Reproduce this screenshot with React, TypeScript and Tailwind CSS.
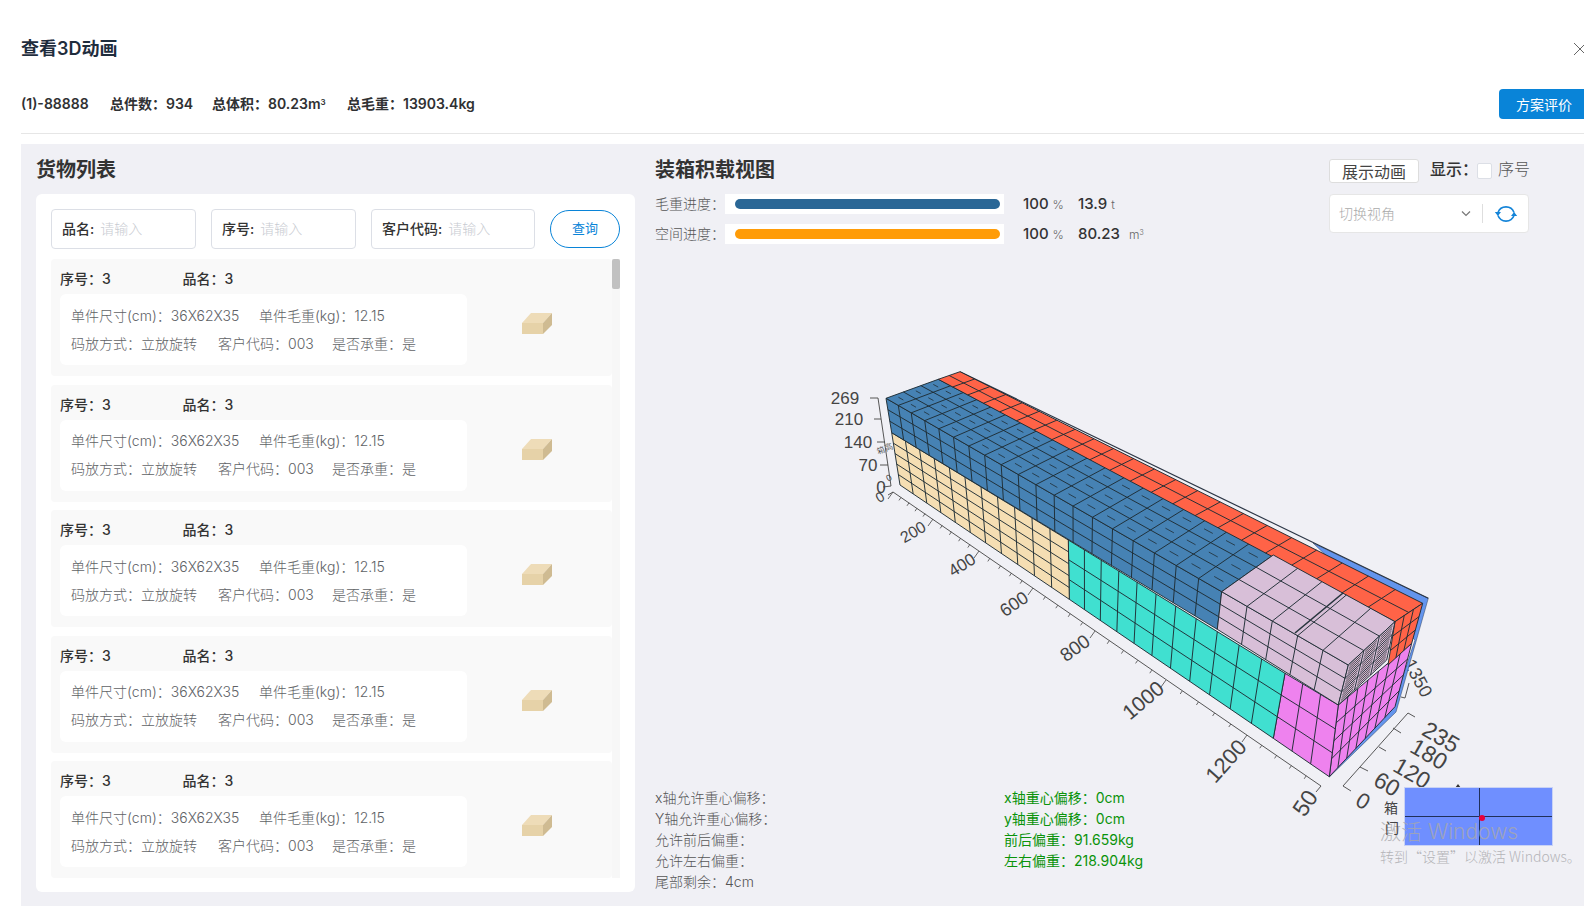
import React from "react";

type P = [number, number];
type Q = [P, P, P, P];

const bl = (q: Q, u: number, v: number): P => {
  const top: P = [q[0][0] + (q[1][0] - q[0][0]) * u, q[0][1] + (q[1][1] - q[0][1]) * u];
  const bot: P = [q[3][0] + (q[2][0] - q[3][0]) * u, q[3][1] + (q[2][1] - q[3][1]) * u];
  return [top[0] + (bot[0] - top[0]) * v, top[1] + (bot[1] - top[1]) * v];
};
const even = (n: number) => Array.from({ length: n + 1 }, (_, i) => i / n);
const eased = (n: number, a = 0.68) => even(n).map((t) => a * t + (1 - a) * t * t);

function Face({ q, fill, us, vs, dash, hatch }: { q: Q; fill: string; us: number[]; vs: number[]; dash?: boolean; hatch?: boolean }) {
  const lines: React.ReactNode[] = [];
  us.forEach((u, i) => {
    const a = bl(q, u, 0);
    const b = bl(q, u, 1);
    lines.push(<line key={"u" + i} x1={a[0]} y1={a[1]} x2={b[0]} y2={b[1]} stroke="#1f2d35" strokeWidth={0.95} />);
  });
  vs.forEach((v, i) => {
    const a = bl(q, 0, v);
    const b = bl(q, 1, v);
    lines.push(<line key={"v" + i} x1={a[0]} y1={a[1]} x2={b[0]} y2={b[1]} stroke="#1f2d35" strokeWidth={0.95} />);
  });
  if (dash) {
    for (let i = 0; i < us.length - 1; i++) {
      for (let j = 0; j < vs.length - 1; j++) {
        const du = us[i + 1] - us[i];
        const dv = vs[j + 1] - vs[j];
        const a = bl(q, us[i] + du * 0.3, vs[j] + dv * 0.5);
        const b = bl(q, us[i] + du * 0.7, vs[j] + dv * 0.5);
        lines.push(<line key={`d${i}-${j}`} x1={a[0]} y1={a[1]} x2={b[0]} y2={b[1]} stroke="#1f2d35" strokeWidth={0.8} />);
      }
    }
  }
  if (hatch) {
    for (let i = 0; i < us.length - 1; i++) {
      for (let j = 0; j < vs.length - 1; j++) {
        const du = us[i + 1] - us[i];
        const dv = vs[j + 1] - vs[j];
        [0.2, 0.4, 0.6, 0.8].forEach((f, k) => {
          const a = bl(q, us[i] + du * 0.12, vs[j] + dv * f);
          const b = bl(q, us[i] + du * 0.88, vs[j] + dv * f);
          lines.push(<line key={`h${i}-${j}-${k}`} x1={a[0]} y1={a[1]} x2={b[0]} y2={b[1]} stroke="#2c2c30" strokeWidth={0.8} />);
        });
      }
    }
  }
  return (
    <g>
      <polygon points={q.map((p) => p.join(",")).join(" ")} fill={fill} />
      {lines}
    </g>
  );
}

function AxisLabel({ x, y, r, s = 17, children }: { x: number; y: number; r: number; s?: number; children: React.ReactNode }) {
  return (
    <text x={x} y={y} fontSize={s} fill="#444" textAnchor="middle" dominantBaseline="central" transform={`rotate(${r} ${x} ${y})`} fontFamily="'Liberation Sans', sans-serif">
      {children}
    </text>
  );
}

const xRoots: P[] = [[893, 492], [933, 519], [979, 551], [1033, 588], [1095, 631], [1166, 680], [1247, 735], [1321, 786]];

function Chart() {
  const ticks: React.ReactNode[] = [];
  xRoots.slice(0, -1).forEach((p, i) => {
    const nx = xRoots[i + 1];
    for (let k = 0; k < 5; k++) {
      const x = p[0] + ((nx[0] - p[0]) * k) / 5;
      const y = p[1] + ((nx[1] - p[1]) * k) / 5;
      const major = k === 0;
      ticks.push(<line key={`t${i}-${k}`} x1={x} y1={y} x2={x - (major ? 5 : 2)} y2={y + (major ? 7 : 3)} stroke="#444" strokeWidth={0.8} />);
    }
  });
  return (
    <svg width={929} height={538} viewBox="655 250 929 538" className="block overflow-visible">
      {/* axes */}
      <polyline points="870,398 878,398 891,486 883,487" fill="none" stroke="#444" strokeWidth={0.9} />
      <line x1={874} y1={419} x2={881} y2={419} stroke="#444" strokeWidth={0.9} />
      <line x1={877} y1={442} x2={885} y2={442} stroke="#444" strokeWidth={0.9} />
      <line x1={880} y1={465} x2={888} y2={465} stroke="#444" strokeWidth={0.9} />
      <AxisLabel x={845} y={398} r={0}>269</AxisLabel>
      <AxisLabel x={849} y={419} r={0}>210</AxisLabel>
      <AxisLabel x={858} y={442} r={0}>140</AxisLabel>
      <AxisLabel x={868} y={465} r={0}>70</AxisLabel>
      <AxisLabel x={881} y={487} r={0}>0</AxisLabel>
      <AxisLabel x={885} y={449} r={-20} s={8}>箱高</AxisLabel>
      <AxisLabel x={889} y={478} r={-30} s={9}>0</AxisLabel>

      <polyline points="888,495 893,492 1321,786 1316,792" fill="none" stroke="#444" strokeWidth={0.9} />
      {ticks}
      <AxisLabel x={880} y={497} r={-30} s={14}>0</AxisLabel>
      <AxisLabel x={913} y={532} r={-30} s={16}>200</AxisLabel>
      <AxisLabel x={962} y={565} r={-32} s={17}>400</AxisLabel>
      <AxisLabel x={1014} y={604} r={-34} s={18}>600</AxisLabel>
      <AxisLabel x={1075} y={648} r={-36} s={19}>800</AxisLabel>
      <AxisLabel x={1143} y={700} r={-40} s={21}>1000</AxisLabel>
      <AxisLabel x={1226} y={761} r={-48} s={22}>1200</AxisLabel>
      <AxisLabel x={1305} y={803} r={-56} s={23}>50</AxisLabel>

      <polyline points="1351,791 1343,786 1408,713 1415,717" fill="none" stroke="#444" strokeWidth={0.9} />
      <line x1={1360} y1={767} x2={1368} y2={771} stroke="#444" strokeWidth={0.9} />
      <line x1={1379} y1={747} x2={1386} y2={751} stroke="#444" strokeWidth={0.9} />
      <line x1={1393} y1={728} x2={1401} y2={733} stroke="#444" strokeWidth={0.9} />
      <AxisLabel x={1363} y={801} r={30} s={22}>0</AxisLabel>
      <AxisLabel x={1387} y={784} r={30} s={23}>60</AxisLabel>
      <AxisLabel x={1412} y={773} r={30} s={23}>120</AxisLabel>
      <AxisLabel x={1429} y={754} r={30} s={23}>180</AxisLabel>
      <AxisLabel x={1441} y={737} r={30} s={23}>235</AxisLabel>

      <polyline points="1401,697 1405,698 1409,683" fill="none" stroke="#444" strokeWidth={0.9} />
      <AxisLabel x={1418} y={678} r={62} s={18}>1350</AxisLabel>
      <polygon points="1458,784 1455,788 1461,788" fill="#333" />

      {/* container */}
      <polygon points="1313,543 1428.3,598.3 1396,712 1329.3,777 1395,700 1415,640" fill="#6495ed" stroke="#2b3f5c" strokeWidth={0.5} />
      <line x1={960} y1={371.7} x2={1428.3} y2={598.3} stroke="#2b3645" strokeWidth={1.2} />

      <Face q={[[1338.3, 705], [1411.7, 643.3], [1395, 706.7], [1329.3, 776.7]]} fill="#ee82ee" us={eased(7, 0.9)} vs={even(4)} />
      <Face q={[[1285, 673.3], [1338.3, 705], [1329.3, 776.7], [1273.3, 738.3]]} fill="#ee82ee" us={even(3)} vs={even(3)} />
      <Face q={[[1068.3, 540], [1285, 673.3], [1273.3, 738.3], [1069.3, 599.3]]} fill="#40e0d0" us={eased(11, 0.8)} vs={even(3)} />
      <Face q={[[891.7, 432.7], [1068.3, 540], [1069.3, 599.3], [900, 485]]} fill="#f5deb3" us={eased(11, 0.84)} vs={even(5)} />
      <Face q={[[886, 398.3], [1221.7, 591.7], [1217.3, 629.3], [891.7, 432.7]]} fill="#4682b4" us={eased(19)} vs={even(3)} />
      <Face q={[[886, 398.3], [1221.7, 591.7], [1273.3, 555], [938.3, 379.3]]} fill="#4682b4" us={eased(19)} vs={even(3)} dash />
      <Face q={[[938.3, 379.3], [1395, 621.7], [1422.7, 603.3], [960, 371.7]]} fill="#ff6347" us={eased(22)} vs={even(2)} />
      <Face q={[[1395, 621.7], [1422.7, 603.3], [1411.7, 643.3], [1388, 665]]} fill="#ff6347" us={even(3)} vs={even(3)} />
      <Face q={[[1221.7, 591.7], [1348.3, 665], [1338.3, 705], [1217.3, 629.3]]} fill="#d8bfd8" us={even(5)} vs={even(3)} />
      <Face q={[[1221.7, 591.7], [1348.3, 665], [1395, 621.7], [1273.3, 555]]} fill="#d8bfd8" us={even(5)} vs={even(3)} />
      <Face q={[[1348.3, 665], [1395, 621.7], [1386.7, 660], [1338.3, 705]]} fill="#d8bfd8" us={even(3)} vs={even(3)} hatch />
      <line x1={1295} y1={633} x2={1343} y2={593} stroke="#26343c" strokeWidth={1.6} />
    </svg>
  );
}

function Crate() {
  return (
    <svg width={30} height={21} viewBox="0 0 30 21" className="block">
      <polygon points="0,10 9,0 30,0 21,10" fill="#eedcb8" />
      <polygon points="21,10 30,0 30,12 21,21" fill="#cfbb92" />
      <rect x={0} y={10} width={21} height={11} fill="#e6d2a8" />
    </svg>
  );
}

function Item() {
  return (
    <div className="h-[117px] mb-[8.5px] bg-[#f9f9f9] rounded-[4px] pl-[9px] shrink-0">
      <div className="h-[35px] pt-[4px] flex items-center text-[14px] font-medium text-[#333]">
        <span className="w-[122.5px]">序号：3</span>
        <span>品名：3</span>
      </div>
      <div className="flex">
        <div className="w-[407px] h-[71px] bg-white rounded-[6px] pl-[11px] text-[14px] text-[#606266] font-light">
          <div className="h-[28px] mt-[7px] flex items-center">
            <span className="w-[188px]">单件尺寸(cm)：36X62X35</span>
            <span>单件毛重(kg)：12.15</span>
          </div>
          <div className="h-[28px] flex items-center">
            <span className="w-[147px]">码放方式：立放旋转</span>
            <span className="w-[114px]">客户代码：003</span>
            <span>是否承重：是</span>
          </div>
        </div>
        <div className="ml-[55px] mt-[19px]">
          <Crate />
        </div>
      </div>
    </div>
  );
}

function Field({ label, w }: { label: string; w: string }) {
  return (
    <div className={`${w} h-[40px] bg-white border border-[#dcdfe6] rounded-[4px] flex items-center pl-[10px] pb-[2px] text-[14px]`}>
      <span className="font-medium text-[#333] mr-[6px]">{label}:</span>
      <span className="text-[#c8cbd1] font-light">请输入</span>
    </div>
  );
}

function Progress({ label, color, pct, val, unit, unitGap }: { label: string; color: string; pct: string; val: string; unit: React.ReactNode; unitGap: string }) {
  return (
    <div className="flex items-center h-[20px]">
      <span className="w-[70px] pb-[2px] text-[14px] text-[#555] font-light">{label}：</span>
      <div className="w-[279px] h-[20px] bg-white pl-[10px] pr-[4px] py-[5px]">
        <div className={`h-[10px] rounded-full ${color}`} />
      </div>
      <span className="ml-[19px] w-[55px] pt-[1px] text-[15px] font-medium text-[#333]">
        {pct} <span className="text-[12px] font-light text-[#666]">%</span>
      </span>
      <span className="pt-[1px] text-[15px] font-medium text-[#333]">{val}</span>
      <span className={`${unitGap} pt-[1px] text-[12px] font-light text-[#666]`}>{unit}</span>
    </div>
  );
}

export default function App() {
  return (
    <div className="relative w-[1584px] h-[907px] overflow-hidden bg-white font-['Inter','Noto_Sans_CJK_SC','Noto_Sans',sans-serif]">
      <div className="h-[89px] pl-[21px] pt-[37px] flex justify-between items-start">
        <h1 className="text-[18px] leading-[24px] font-semibold text-[#1f2d3d]">查看3D动画</h1>
        <svg width={14} height={14} viewBox="0 0 14 14" className="-mr-[3px] mt-[5px]">
          <path d="M1 1 L13 13 M13 1 L1 13" stroke="#666" strokeWidth={1} fill="none" />
        </svg>
      </div>

      <div className="ml-[21px] h-[45px] border-b border-[#e6e6e6] flex justify-between items-start">
        <div className="h-[28px] flex items-center text-[14px] font-semibold text-[#303133]">
          <span className="w-[89px]">(1)-88888</span>
          <span className="w-[102px]">总件数：934</span>
          <span className="w-[135px]">
            总体积：80.23m<sup className="text-[8px]">3</sup>
          </span>
          <span>总毛重：13903.4kg</span>
        </div>
        <button className="w-[85px] h-[30px] bg-[#0984d8] text-white text-[14px] text-left pl-[17px] rounded-l-[4px]">方案评价</button>
      </div>

      <div className="ml-[21px] mt-[10px] h-[762px] bg-[#f0f0f5] flex pl-[15px]">
        <div className="w-[599px]">
          <div className="h-[50px] pt-[2px] flex items-center text-[20px] font-bold text-[#333]">货物列表</div>
          <div className="h-[698px] bg-white rounded-[6px] pl-[15px] pt-[15px]">
            <div className="flex items-center gap-[15px]">
              <Field label="品名" w="w-[145px]" />
              <Field label="序号" w="w-[145px]" />
              <Field label="客户代码" w="w-[164px]" />
              <button className="w-[70px] h-[38px] rounded-full border border-[#0984d8] text-[#0984d8] text-[13px]">查询</button>
            </div>
            <div className="mt-[10px] h-[619px] flex overflow-hidden">
              <div className="w-[561px] flex flex-col overflow-hidden">
                {[0, 1, 2, 3, 4].map((i) => (
                  <Item key={i} />
                ))}
              </div>
              <div className="w-[8px] bg-[#f7f7f7]">
                <div className="h-[30px] bg-[#c1c1c1] rounded-[2px]" />
              </div>
            </div>
          </div>
        </div>

        <div className="w-[929px] ml-[20px]">
          <div className="h-[106px] flex">
            <div className="w-[674px]">
              <div className="h-[50px] pt-[2px] flex items-center text-[20px] font-bold text-[#333]">装箱积载视图</div>
              <div className="flex flex-col gap-[10px]">
                <Progress label="毛重进度" color="bg-[#2a6796]" pct="100" val="13.9" unit="t" unitGap="ml-[4px]" />
                <Progress label="空间进度" color="bg-[#ff9c08]" pct="100" val="80.23" unit={<>m<sup className="text-[7px]">3</sup></>} unitGap="ml-[9px]" />
              </div>
            </div>
            <div className="w-[200px] pt-[15px]">
              <div className="flex items-center h-[24px] whitespace-nowrap">
                <button className="w-[90px] shrink-0 h-[24px] bg-white border border-[#dddddd] rounded-[3px] text-[16px] leading-[24px] text-[#444]">展示动画</button>
                <span className="ml-[11px] w-[47px] shrink-0 pb-[4px] text-[16px] font-medium text-[#333]">显示：</span>
                <span className="shrink-0 w-[15px] h-[16px] bg-white border border-[#dcdfe6] rounded-[2px]" />
                <span className="ml-[6px] shrink-0 pb-[4px] text-[16px] text-[#555] font-light">序号</span>
              </div>
              <div className="mt-[11px] h-[39px] bg-white border border-[#e6e6e6] rounded-[4px] flex items-center pl-[9px]">
                <span className="pb-[1px] text-[14px] text-[#aaa] font-light w-[121px]">切换视角</span>
                <svg width={12} height={8} viewBox="0 0 12 8">
                  <path d="M2 1.5 L6 5.5 L10 1.5" stroke="#777" strokeWidth={1.2} fill="none" />
                </svg>
                <span className="ml-[10px] w-px h-[19px] bg-[#dedede]" />
                <svg width={24} height={24} viewBox="0 0 24 24" className="ml-[11px]">
                  <path d="M4 10.5 A8.5 8.5 0 0 1 20 10.5 M20 13.5 A8.5 8.5 0 0 1 4 13.5" stroke="#1484d8" strokeWidth={1.6} fill="none" />
                  <path d="M0.8 10 L7 10 L3.9 14 Z M23.2 14 L17 14 L20.1 10 Z" fill="#1484d8" />
                </svg>
              </div>
            </div>
          </div>

          <div className="h-[536.5px]">
            <Chart />
          </div>

          <div className="flex text-[14px] leading-[21px] font-light">
            <div className="w-[349px] text-[#555]">
              <div>x轴允许重心偏移：</div>
              <div>Y轴允许重心偏移：</div>
              <div>允许前后偏重：</div>
              <div>允许左右偏重：</div>
              <div>尾部剩余：4cm</div>
            </div>
            <div className="text-[#0a930a] font-normal">
              <div>x轴重心偏移：0cm</div>
              <div>y轴重心偏移：0cm</div>
              <div>前后偏重：91.659kg</div>
              <div>左右偏重：218.904kg</div>
            </div>
          </div>
        </div>
      </div>

      {/* door view minimap */}
      <div className="absolute left-[1384px] top-[787px] flex">
        <div className="w-[20px] text-[14px] leading-[20px] text-[#444] pt-[11px]">
          <div>箱</div>
        </div>
        <div className="relative w-[149px] h-[59px] bg-[#6f8fff] border border-[#c8d2f5]">
          <div className="absolute left-[74px] top-0 bottom-0 w-px bg-[#20305a]" />
          <div className="absolute top-[28px] left-0 right-0 h-px bg-[#20305a]" />
          <div className="absolute left-[74px] top-[27px] w-[6px] h-[6px] rounded-full bg-[#e8003d]" />
        </div>
      </div>

      {/* activation watermark over the page */}
      <div className="absolute left-[1380px] top-[817px] text-[#a8a8ac]/80 pointer-events-none">
        <div className="text-[21px] leading-[30px] font-light">激活 Windows</div>
        <div className="text-[14px] leading-[18px] font-light text-[#b4b4b8] font-['Noto_Sans_CJK_SC',sans-serif]">转到“设置”以激活 Windows。</div>
      </div>
      <div className="absolute left-[1385px] top-[818px] text-[14px] leading-[20px] text-[#444]">门</div>
    </div>
  );
}
